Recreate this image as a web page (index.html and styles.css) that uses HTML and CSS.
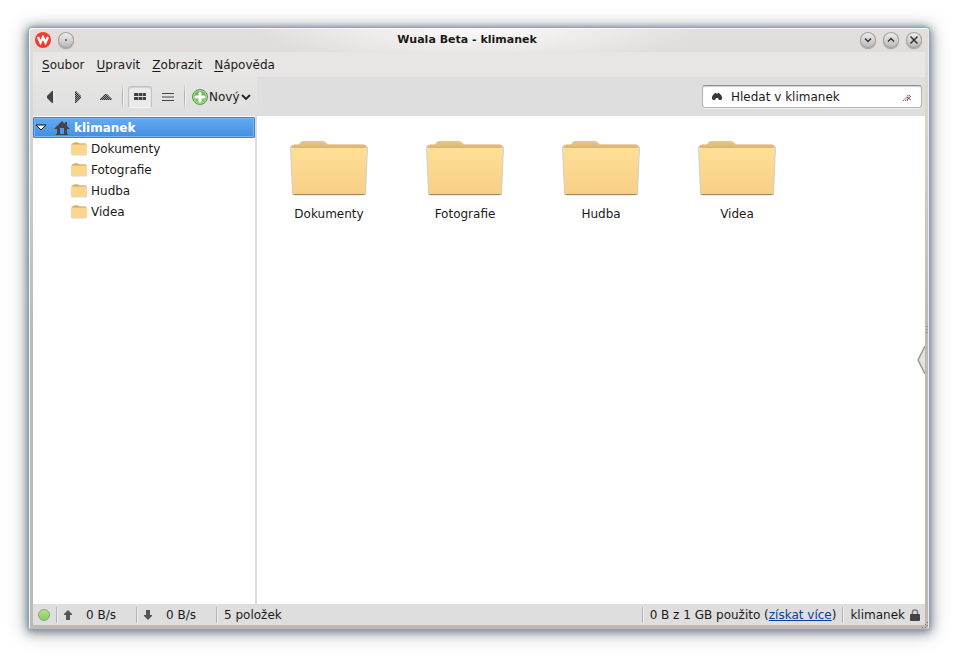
FILE: index.html
```
<!DOCTYPE html>
<html lang="cs">
<head>
    <meta charset="UTF-8">
    <meta name="viewport" content="width=device-width, initial-scale=1.0">
    <title>Wuala Beta - klimanek</title>
    <link rel="stylesheet" href="styles.css">
</head>
<body>

    <!-- Shared icons -->
    <svg class="sprite" aria-hidden="true">
        <defs>
            <linearGradient id="front" x1="0" y1="0" x2="0" y2="1">
                <stop offset="0" stop-color="#ffdf97"/>
                <stop offset="1" stop-color="#f8cf86"/>
            </linearGradient>
            <linearGradient id="back" x1="0" y1="0" x2="0" y2="1">
                <stop offset="0" stop-color="#ebc88a"/>
                <stop offset="1" stop-color="#dfb26b"/>
            </linearGradient>
            <linearGradient id="green" x1="0" y1="0" x2="0" y2="1">
                <stop offset="0" stop-color="#5fae4c"/>
                <stop offset="1" stop-color="#86d068"/>
            </linearGradient>
            <pattern id="dither" width="2" height="2" patternUnits="userSpaceOnUse">
                <rect width="2" height="2" fill="#999"/>
                <rect width="1" height="1" fill="#333"/>
                <rect x="1" y="1" width="1" height="1" fill="#333"/>
            </pattern>
        </defs>
        <symbol id="folder" viewBox="0 0 80 56">
            <path d="M1 8Q1 6 3 5L10 4.500Q11 1 14 1H34Q36 1 39 4.500H75Q79 5 79 8L77 54Q77 55.500 75 55.500H5Q3 55.500 3 54Z" fill="#d0d0d0"/>
            <path d="M3 8V6Q3 5 5 4.500H11L12 2.500Q13 1 15 1H34Q37 2 38 4.500H75Q77 5 77 8Z" fill="url(#back)"/>
            <path d="M2 8H78L76 54H4Z" fill="url(#front)"/>
            <path d="M4.500 54.500H75.500" stroke="#9b8a74"/>
        </symbol>
        <symbol id="folder-small" viewBox="0 0 16 13">
            <path d="M0 2L2 1L3 0H7L9 1H15L16 2V12Q16 13 15 13H1L0 12Z" fill="#d9d6d0"/>
            <path d="M1 3V1H2L3 0H7L8 1H15V3Z" fill="#d3a865"/>
            <path d="M0 2H16L15.500 12H.5Z" fill="#fcd68d"/>
        </symbol>
    </svg>

    <div class="window">
        <header class="titlebar">
            <div class="title-group">
                <svg class="logo" viewBox="0 0 16 16" role="img" aria-label="Wuala">
                    <circle cx="8" cy="8" r="8" fill="#f23c31"/>
                    <path d="M3 5L5.500 10.500L8 5.500L10.500 10.500L13 5" fill="none" stroke="#fff" stroke-width="2.400"/>
                </svg>
                <button class="round" aria-label="Všechny plochy"><svg viewBox="0 0 16 16"><circle cx="8" cy="8" r="1" fill="#555"/></svg></button>
            </div>
            <h1>Wuala Beta - klimanek</h1>
            <div class="title-group">
                <button class="round" aria-label="Minimalizovat"><svg viewBox="0 0 16 16"><path d="M5 6.500L8 9.500L11 6.500"/></svg></button>
                <button class="round" aria-label="Maximalizovat"><svg viewBox="0 0 16 16"><path d="M5 9.500L8 6.500L11 9.500"/></svg></button>
                <button class="round" aria-label="Zavřít"><svg viewBox="0 0 16 16"><path d="M4.500 4.500L11.500 11.500M11.500 4.500L4.500 11.500"/></svg></button>
            </div>
        </header>

        <nav class="menubar">
            <button><u>S</u>oubor</button>
            <button><u>U</u>pravit</button>
            <button><u>Z</u>obrazit</button>
            <button><u>N</u>ápověda</button>
        </nav>

        <div class="toolbar">
            <div class="tools">
                <button class="tool" aria-label="Zpět"><svg viewBox="0 0 16 16"><path d="M11 2V14H10L5 9V7L10 2Z" fill="#444"/></svg></button>
                <button class="tool" aria-label="Vpřed"><svg viewBox="0 0 16 16"><path d="M5 2V14H6L11 9V7L6 2Z" fill="url(#dither)"/></svg></button>
                <button class="tool" aria-label="Nahoru"><svg viewBox="0 0 16 16"><path d="M2 11H14V10L9 5H7L2 10Z" fill="url(#dither)"/></svg></button>
                <span class="separator"></span>
                <button class="tool active" aria-label="Ikony"><svg viewBox="0 0 16 16"><path d="M2 4h4v3h-4zM6.500 4h3.500v3h-3.500zM10.500 4h3.500v3h-3.500zM2 8h4v3h-4zM6.500 8h3.500v3h-3.500zM10.500 8h3.500v3h-3.500z" fill="#444"/></svg></button>
                <button class="tool" aria-label="Seznam"><svg viewBox="0 0 16 16"><path d="M2 4.500H14M2 8H14M2 11.500H14" stroke="#444"/></svg></button>
                <span class="separator"></span>
                <button class="new">
                    <svg class="plus" viewBox="0 0 16 16">
                        <circle cx="8" cy="8" r="7.500" fill="#a8d79a" stroke="#5d9b50"/>
                        <circle cx="8" cy="8" r="6" fill="url(#green)"/>
                        <path d="M8 4V12M4 8H12" stroke="#fff" stroke-width="3" stroke-linecap="round"/>
                    </svg>Nový<svg class="chevron" viewBox="0 0 10 8"><path d="M1 2L5 6L9 2" fill="none" stroke="#222" stroke-width="1.800"/></svg>
                </button>
            </div>
            <form class="search">
                <svg viewBox="0 0 10 8"><path d="M0 6V4L1 2L3 0H4L5 1L6 0H7L9 2L10 4V6L9 7H7L6 5H4L3 7H1Z" fill="#3c3838"/></svg>
                <input type="text" value="Hledat v klimanek" aria-label="Hledat">
                <button type="reset" aria-label="Vymazat"><svg viewBox="0 0 10 8"><path d="M1 8L7 1M3 8L8 2M5 8L7 5" stroke="#666" stroke-dasharray="2 1"/><path d="M5 4L9 7M9 3L5 7" stroke="#8b5656"/></svg></button>
            </form>
        </div>

        <div class="content">
            <aside class="sidebar">
                <a class="row selected" href="#">
                    <svg class="expander" viewBox="0 0 12 8"><path d="M1 1H11L6 6Z" fill="#fff" stroke="#111"/></svg>
                    <svg class="home" viewBox="0 0 16 14"><path d="M8 0L11 3V1H13V5L16 8H13V13H14V14H2V13H3V8H0ZM6 7V13H10V7Z" fill="#444" fill-rule="evenodd"/></svg>
                    klimanek
                </a>
                <a class="row" href="#"><svg class="folder-small"><use href="#folder-small"/></svg>Dokumenty</a>
                <a class="row" href="#"><svg class="folder-small"><use href="#folder-small"/></svg>Fotografie</a>
                <a class="row" href="#"><svg class="folder-small"><use href="#folder-small"/></svg>Hudba</a>
                <a class="row" href="#"><svg class="folder-small"><use href="#folder-small"/></svg>Videa</a>
            </aside>
            <main class="files">
                <a class="file" href="#"><svg><use href="#folder"/></svg>Dokumenty</a>
                <a class="file" href="#"><svg><use href="#folder"/></svg>Fotografie</a>
                <a class="file" href="#"><svg><use href="#folder"/></svg>Hudba</a>
                <a class="file" href="#"><svg><use href="#folder"/></svg>Videa</a>
            </main>
            <button class="panel-handle" aria-label="Zobrazit panel"><svg viewBox="0 0 8 30"><path d="M8 1L1 15L8 29Z" fill="#e2e2e2"/><path d="M8 1L1 15L8 29" fill="none" stroke="#999" stroke-width="1.500"/></svg></button>
            <svg class="splitter" viewBox="0 0 2 7"><path d="M1 0V7" stroke="#777" stroke-dasharray="1 2"/></svg>
        </div>

        <footer class="statusbar">
            <span class="online"></span>
            <span class="rate"><svg viewBox="0 0 8 10"><path d="M4 0L8 4V5H6V10H2V5H0V4Z"/></svg>0 B/s</span>
            <span class="rate"><svg viewBox="0 0 8 10"><path d="M4 10L8 6V5H6V0H2V5H0V6Z"/></svg>0 B/s</span>
            <span class="cell">5 položek</span>
            <span class="cell push">0 B z 1 GB použito (<a href="#">získat více</a>)</span>
            <span class="cell">klimanek<svg class="lock" viewBox="0 0 10 12"><path d="M2.500 6V3Q2.500 1 5 1T7.500 3V6" fill="none" stroke="#777" stroke-width="1.500"/><rect y="5" width="10" height="7" rx="1" fill="#444"/></svg></span>
        </footer>
        <svg class="grip" viewBox="0 0 6 6"><path d="M5 0h1v1h-1zM3 2h1v1h-1zM5 3h1v1h-1zM0 5h1v1h-1zM3 5h1v1h-1z" fill="#777"/></svg>
    </div>

</body>
</html>
```
FILE: styles.css
```
/* --- Basic Setup --- */
:root {
    --text-color: #1c1a18;
    --bar-bg: #dedede;
    --frame-color: #bfb8b4;
    --glow-color: #7ba9c2;
}

* {
    box-sizing: border-box;
}

body {
    margin: 0;
    padding: 28px 29px 29px;
    height: 100vh;
    background: #fff;
    color: var(--text-color);
    font-family: "DejaVu Sans", sans-serif;
    font-size: 12px;
    line-height: 16px;
}

button {
    padding: 0;
    border: none;
    background: none;
    color: inherit;
    font: inherit;
}

a {
    color: inherit;
    text-decoration: none;
}

svg {
    display: block;
    flex: none;
}

.sprite {
    position: absolute;
    width: 0;
    height: 0;
}

/* --- Window Frame --- */
.window {
    position: relative;
    display: flex;
    flex-direction: column;
    height: 100%;
    padding: 0 4px 4px;
    border-radius: 4px 4px 2px 2px;
    background: linear-gradient(#e3dfdd, #d9d4d1 90px, var(--frame-color) 300px);
    box-shadow: inset 1px 1px 0 #f8f6f5, inset -1px 0 0 #eeebe9, 0 0 2px 1px var(--glow-color), 0 1px 8px 2px rgba(60, 75, 85, 0.6), 0 2px 18px 4px rgba(60, 65, 70, 0.3);
}

.titlebar {
    display: grid;
    grid-template-columns: auto 1fr auto;
    align-items: center;
    height: 24px;
    padding: 0 3px 0 2px;
    background: radial-gradient(ellipse 220px 40px at center top, #fbfafa, rgba(251, 250, 250, 0));
}

.titlebar h1 {
    margin: 0;
    font-size: 11px;
    line-height: 16px;
    text-align: center;
}

.title-group {
    display: flex;
    gap: 7px;
}

.logo,
.round {
    width: 16px;
    height: 16px;
}

.round {
    border-radius: 50%;
    background: linear-gradient(#f1f0f0, #b9b7b6);
    box-shadow: inset 0 0 0 1px #a3a1a0, 0 1px 1px #999;
}

.round path {
    fill: none;
    stroke: #333;
    stroke-width: 1.5px;
}

.menubar {
    display: flex;
    gap: 12px;
    align-items: center;
    height: 25px;
    padding: 0 9px;
    background: #e7e6e5;
}

.menubar u {
    text-underline-offset: 2px;
}

/* --- Toolbar --- */
.toolbar {
    display: flex;
    justify-content: space-between;
    align-items: center;
    height: 39px;
    padding-right: 3px;
    background: var(--bar-bg);
}

.tools {
    display: flex;
    gap: 4px;
    align-items: center;
    width: 224px;
    height: 39px;
    padding-left: 5px;
    background: linear-gradient(#e5e5e4, #dfdfdf);
}

.tool {
    display: grid;
    place-items: center;
    width: 24px;
    height: 22px;
}

.tool svg {
    width: 16px;
    height: 16px;
}

.tool.active {
    border: 1px solid #c2c2c2;
    border-bottom-color: #f5f5f5;
    border-radius: 3px;
    background: #eaeaea;
    box-shadow: inset 0 1px 1px #cfcfcf;
}

.separator {
    width: 2px;
    height: 26px;
    background: linear-gradient(90deg, #b3b3b3 50%, #f4f4f4 50%);
    -webkit-mask-image: linear-gradient(transparent, #000 30%, #000 70%, transparent);
    mask-image: linear-gradient(transparent, #000 30%, #000 70%, transparent);
}

.new {
    display: flex;
    gap: 1px;
    align-items: center;
    padding-left: 2px;
}

.plus {
    width: 16px;
    height: 16px;
}

.chevron {
    width: 10px;
    height: 8px;
}

.search {
    display: flex;
    align-items: center;
    width: 220px;
    height: 23px;
    padding: 0 9px;
    border: 1px solid #b5b5b5;
    border-top-color: #929292;
    border-radius: 3px;
    background: #fff;
    box-shadow: inset 0 1px 1px #ccc, 0 1px 0 #eee;
}

.search svg {
    width: 10px;
    height: 8px;
}

.search input {
    flex: 1;
    min-width: 0;
    margin-left: 9px;
    padding: 0;
    border: none;
    outline: none;
    background: none;
    color: inherit;
    font: inherit;
}

/* --- Content Area --- */
.content {
    position: relative;
    display: flex;
    flex: 1;
    min-height: 0;
    background: #fff;
}

.sidebar {
    width: 224px;
    padding-top: 1px;
    border-right: 2px solid #dcdcdc;
}

.row {
    display: flex;
    gap: 4px;
    align-items: center;
    height: 21px;
    padding-left: 38px;
}

.row.selected {
    padding-left: 2px;
    border-radius: 2px;
    background: linear-gradient(#62adf8, #438cda);
    box-shadow: inset 0 0 0 1px #3d83cc, inset 0 0 0 2px #75b6f5;
    color: #fff;
    font-weight: bold;
}

.expander {
    width: 12px;
    height: 8px;
}

.home {
    width: 16px;
    height: 14px;
    margin-left: 3px;
}

.folder-small {
    width: 16px;
    height: 14px;
}

.files {
    display: grid;
    flex: 1;
    grid-template-columns: repeat(auto-fill, 136px);
    align-content: start;
    padding: 24px 4px;
}

.file {
    display: flex;
    flex-direction: column;
    gap: 10px;
    align-items: center;
}

.file svg {
    width: 80px;
    height: 56px;
}

.panel-handle {
    position: absolute;
    top: 229px;
    right: 0;
}

.panel-handle svg {
    width: 8px;
    height: 30px;
}

.splitter {
    position: absolute;
    top: 210px;
    right: -3px;
    width: 2px;
    height: 7px;
}

/* --- Status Bar --- */
.statusbar {
    display: flex;
    align-items: center;
    height: 21px;
    padding: 0 5px;
    background: var(--bar-bg);
}

.online {
    width: 12px;
    height: 12px;
    margin-right: 6px;
    border: 1px solid #86ab6a;
    border-radius: 50%;
    background: linear-gradient(#b1e08a, #8fcb60);
}

.rate,
.cell {
    display: flex;
    align-items: center;
    padding-left: 7px;
    border-left: 1px solid #b5b5b5;
    box-shadow: inset 1px 0 0 #efefef;
}

.rate {
    gap: 14px;
    width: 80px;
}

.rate svg {
    width: 8px;
    height: 10px;
    fill: #555;
}

.push {
    margin-left: auto;
    padding-right: 6px;
}

.statusbar a {
    color: #0a3d9c;
    text-decoration: underline;
}

.lock {
    width: 10px;
    height: 12px;
    margin-left: 5px;
}

.grip {
    position: absolute;
    right: 1px;
    bottom: 1px;
    width: 6px;
    height: 6px;
}
```
